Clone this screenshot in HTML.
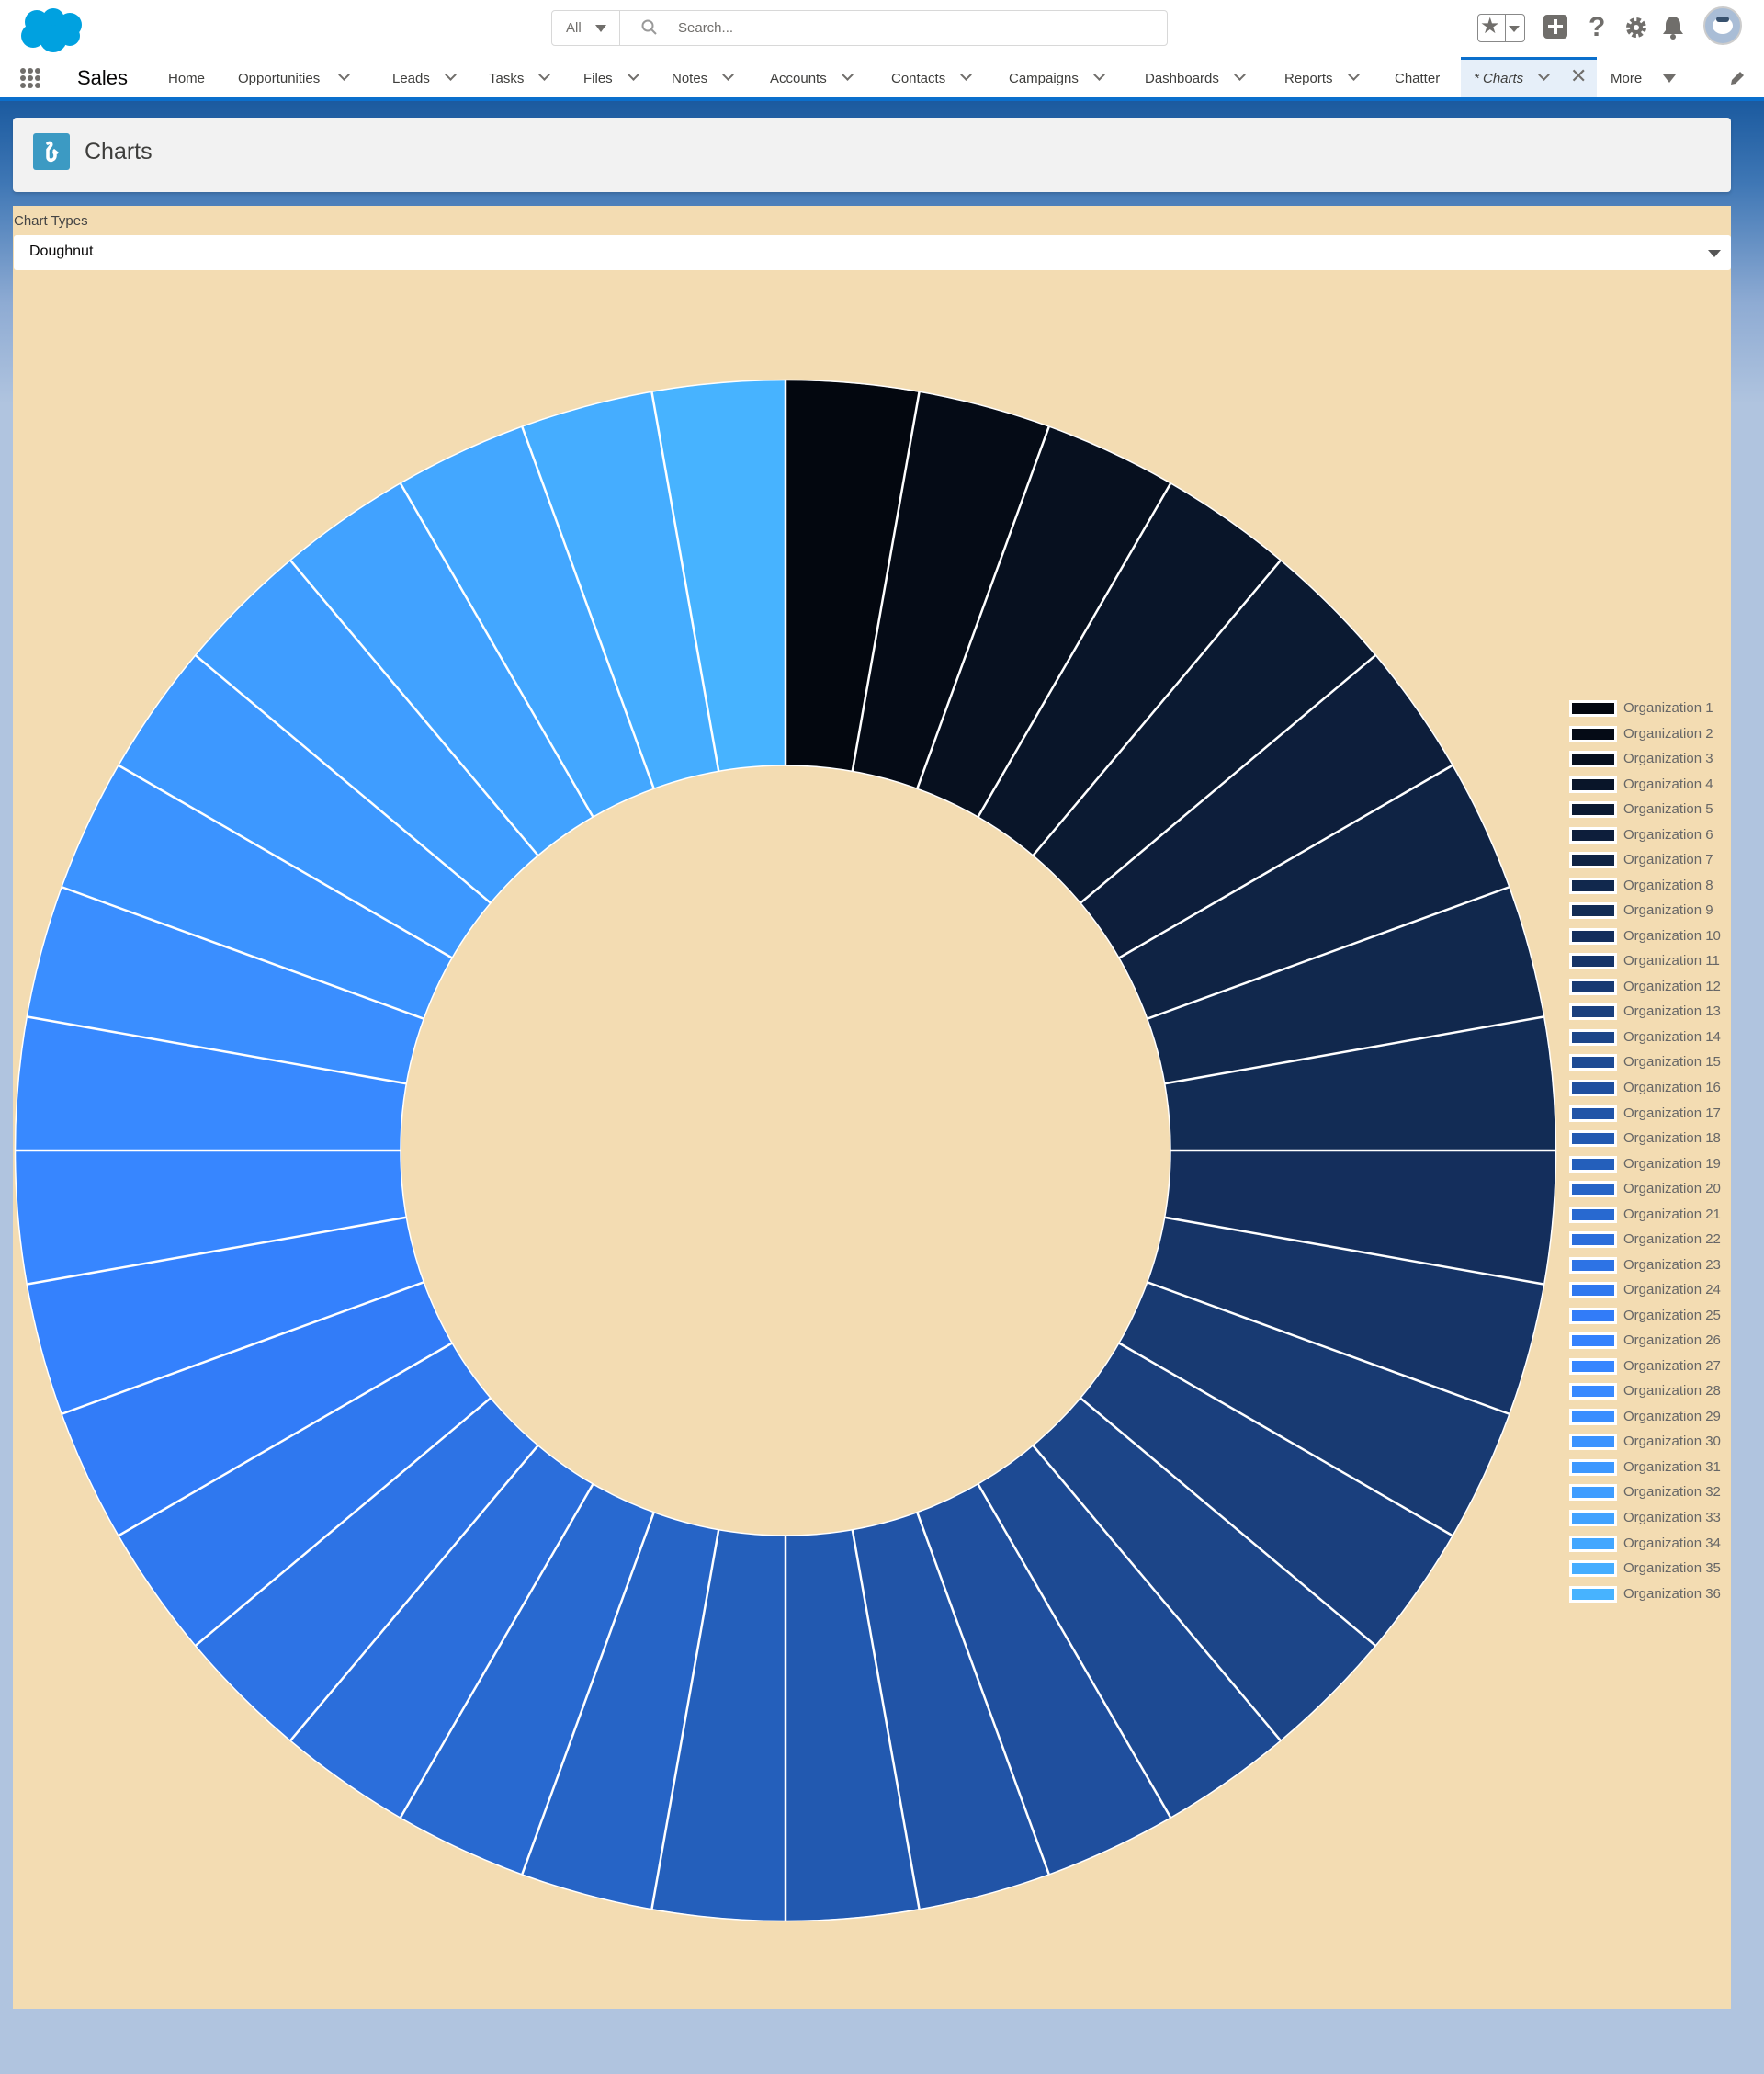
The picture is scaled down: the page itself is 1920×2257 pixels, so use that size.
<!DOCTYPE html>
<html><head><meta charset="utf-8">
<style>
*{margin:0;padding:0;box-sizing:border-box}
body{width:1920px;height:2257px;overflow:hidden;font-family:"Liberation Sans",sans-serif;background:#b0c4df;position:relative}
.bg{position:absolute;left:0;top:110px;width:1920px;height:330px;background:linear-gradient(#1b5a9f 0px,#3f77b5 90px,#8eabd3 220px,#b0c4df 330px)}
.top{position:absolute;left:0;top:0;width:1920px;height:110px;background:#fff;border-bottom:4px solid #0b6fcc}
.nav{position:absolute;top:77px;font-size:15px;color:#3e3e3c;white-space:nowrap}
.chev{display:inline-block;width:9px;height:9px;border-right:2px solid #706e6b;border-bottom:2px solid #706e6b;transform:rotate(45deg);margin-left:18px;position:relative;top:-4px}
.card{position:absolute;left:14px;top:128px;width:1870px;height:81px;background:#f2f2f2;border-radius:4px;box-shadow:0 2px 3px rgba(0,0,0,.15)}
.panel{position:absolute;left:14px;top:224px;width:1870px;height:1962px;background:#f3dcb2}
.lg{position:absolute;left:1708px;font-size:15px;color:#666;height:20px;line-height:20px}
.lg i{position:absolute;left:0;top:1px;width:52px;height:18px;border:3px solid #fff}
.lg span{position:absolute;left:59px;white-space:nowrap}
</style></head><body>
<div class="bg"></div>
<div class="top">
 <svg style="position:absolute;left:18px;top:6px" width="78" height="52" viewBox="0 0 78 52"><g fill="#00a1e0"><circle cx="22" cy="18" r="13"/><circle cx="40" cy="15" r="12"/><circle cx="58" cy="21" r="13"/><circle cx="18" cy="33" r="13"/><circle cx="40" cy="36" r="15"/><circle cx="58" cy="33" r="11"/></g></svg>
 <div style="position:absolute;left:600px;top:11px;width:671px;height:39px;border:1px solid #d8d8d8;border-radius:4px"></div>
 <div style="position:absolute;left:674px;top:11px;width:1px;height:39px;background:#d8d8d8"></div>
 <div style="position:absolute;left:616px;top:22px;font-size:15px;color:#706e6b">All</div>
 <div style="position:absolute;left:648px;top:27px;border-left:6px solid transparent;border-right:6px solid transparent;border-top:8px solid #706e6b"></div>
 <svg style="position:absolute;left:698px;top:21px" width="18" height="18" viewBox="0 0 18 18"><circle cx="7" cy="7" r="5.5" fill="none" stroke="#999" stroke-width="2"/><path d="M11 11l5 5" stroke="#999" stroke-width="2"/></svg>
 <div style="position:absolute;left:738px;top:22px;font-size:15px;color:#706e6b">Search...</div>
 <div style="position:absolute;left:1608px;top:15px;width:52px;height:31px;border:1px solid #888;border-radius:4px"></div>
 <div style="position:absolute;left:1638px;top:15px;width:1px;height:31px;background:#888"></div>
 <div style="position:absolute;left:1611px;top:14px;font-size:24px;color:#706e6b">★</div>
 <div style="position:absolute;left:1642px;top:28px;border-left:6px solid transparent;border-right:6px solid transparent;border-top:7px solid #706e6b"></div>
 <div style="position:absolute;left:1680px;top:16px;width:26px;height:26px;background:#706e6b;border-radius:4px"></div>
 <div style="position:absolute;left:1691px;top:21px;width:4px;height:16px;background:#fff"></div>
 <div style="position:absolute;left:1685px;top:27px;width:16px;height:4px;background:#fff"></div>
 <div style="position:absolute;left:1729px;top:13px;font-size:30px;font-weight:bold;color:#706e6b">?</div>
 <svg style="position:absolute;left:1768px;top:17px" width="26" height="26" viewBox="0 0 26 26"><circle cx="13" cy="13" r="8" fill="none" stroke="#706e6b" stroke-width="6" stroke-dasharray="4 2.3"/><circle cx="13" cy="13" r="7" fill="#706e6b"/><circle cx="13" cy="13" r="3" fill="#fff"/></svg>
 <svg style="position:absolute;left:1808px;top:16px" width="26" height="28" viewBox="0 0 26 28"><path d="M13 2c-5 0-8 4-8 9v6l-3 4h22l-3-4v-6c0-5-3-9-8-9z" fill="#706e6b"/><circle cx="13" cy="24" r="3" fill="#706e6b"/></svg>
 <div style="position:absolute;left:1854px;top:7px;width:42px;height:42px;border-radius:50%;background:#a9bdd6;border:2px solid #ccc"></div>
 <div style="position:absolute;left:1864px;top:19px;width:22px;height:18px;border-radius:50%;background:#fff"></div>
 <div style="position:absolute;left:1868px;top:18px;width:14px;height:6px;border-radius:4px;background:#37516e"></div>
 <svg style="position:absolute;left:22px;top:74px" width="22" height="22"><g fill="#706e6b"><circle cx="3" cy="3" r="3"/><circle cx="11" cy="3" r="3"/><circle cx="19" cy="3" r="3"/><circle cx="3" cy="11" r="3"/><circle cx="11" cy="11" r="3"/><circle cx="19" cy="11" r="3"/><circle cx="3" cy="19" r="3"/><circle cx="11" cy="19" r="3"/><circle cx="19" cy="19" r="3"/></g></svg>
 <div style="position:absolute;left:84px;top:72px;font-size:22px;color:#080707">Sales</div>
 <div class="nav" style="left:183px">Home</div>
 <div class="nav" style="left:259px">Opportunities<span class="chev" style="margin-left:22px"></span></div>
 <div class="nav" style="left:427px">Leads<span class="chev"></span></div>
 <div class="nav" style="left:532px">Tasks<span class="chev"></span></div>
 <div class="nav" style="left:635px">Files<span class="chev"></span></div>
 <div class="nav" style="left:731px">Notes<span class="chev"></span></div>
 <div class="nav" style="left:838px">Accounts<span class="chev"></span></div>
 <div class="nav" style="left:970px">Contacts<span class="chev"></span></div>
 <div class="nav" style="left:1098px">Campaigns<span class="chev"></span></div>
 <div class="nav" style="left:1246px">Dashboards<span class="chev"></span></div>
 <div class="nav" style="left:1398px">Reports<span class="chev"></span></div>
 <div class="nav" style="left:1518px">Chatter</div>
 <div style="position:absolute;left:1590px;top:62px;width:148px;height:44px;background:#e6eff9;border-top:3px solid #0b6fcc"></div>
 <div class="nav" style="left:1604px;font-style:italic">* Charts<span class="chev"></span></div>
 <div class="nav" style="left:1709px;top:70px;font-size:22px;color:#706e6b">✕</div>
 <div class="nav" style="left:1753px">More</div>
 <div style="position:absolute;left:1810px;top:81px;border-left:7px solid transparent;border-right:7px solid transparent;border-top:9px solid #706e6b"></div>
 <svg style="position:absolute;left:1882px;top:76px" width="18" height="18" viewBox="0 0 18 18"><path d="M2 16l1-5 9-9 4 4-9 9z" fill="#706e6b"/></svg>
</div>
<div class="card">
 <div style="position:absolute;left:22px;top:17px;width:40px;height:40px;background:#3c9ac3;border-radius:3px"></div>
 <svg style="position:absolute;left:22px;top:17px" width="40" height="40" viewBox="0 0 40 40"><path d="M16 11c3-2 5 1 3 3l-3 4v8c0 3 3 4 5 3 3-1 4-5 2-8" fill="none" stroke="#fff" stroke-width="3.5" stroke-linecap="round"/><path d="M22 18l5 4" stroke="#fff" stroke-width="3"/></svg>
 <div style="position:absolute;left:78px;top:23px;font-size:25px;color:#3e3e3c">Charts</div>
</div>
<div class="panel">
 <div style="position:absolute;left:1px;top:8px;font-size:15px;color:#444">Chart Types</div>
 <div style="position:absolute;left:1px;top:32px;width:1869px;height:38px;background:#fff;border-radius:3px"></div>
 <div style="position:absolute;left:18px;top:41px;font-size:16px;color:#080707">Doughnut</div>
 <div style="position:absolute;left:1845px;top:48px;border-left:7px solid transparent;border-right:7px solid transparent;border-top:8px solid #555"></div>
</div>
<svg style="position:absolute;left:0;top:0" width="1920" height="2257">
<g fill="none" stroke-width="419">
<circle cx="855" cy="1252" r="628.5" stroke="#03070f" stroke-dasharray="109.69 4000" transform="rotate(-90 855 1252)"/>
<circle cx="855" cy="1252" r="628.5" stroke="#050b16" stroke-dasharray="109.69 4000" transform="rotate(-80 855 1252)"/>
<circle cx="855" cy="1252" r="628.5" stroke="#07101f" stroke-dasharray="109.69 4000" transform="rotate(-70 855 1252)"/>
<circle cx="855" cy="1252" r="628.5" stroke="#091529" stroke-dasharray="109.69 4000" transform="rotate(-60 855 1252)"/>
<circle cx="855" cy="1252" r="628.5" stroke="#0b1a32" stroke-dasharray="109.69 4000" transform="rotate(-50 855 1252)"/>
<circle cx="855" cy="1252" r="628.5" stroke="#0d1e3b" stroke-dasharray="109.69 4000" transform="rotate(-40 855 1252)"/>
<circle cx="855" cy="1252" r="628.5" stroke="#0f2344" stroke-dasharray="109.69 4000" transform="rotate(-30 855 1252)"/>
<circle cx="855" cy="1252" r="628.5" stroke="#11284d" stroke-dasharray="109.69 4000" transform="rotate(-20 855 1252)"/>
<circle cx="855" cy="1252" r="628.5" stroke="#122c55" stroke-dasharray="109.69 4000" transform="rotate(-10 855 1252)"/>
<circle cx="855" cy="1252" r="628.5" stroke="#142e5c" stroke-dasharray="109.69 4000" transform="rotate(0 855 1252)"/>
<circle cx="855" cy="1252" r="628.5" stroke="#163467" stroke-dasharray="109.69 4000" transform="rotate(10 855 1252)"/>
<circle cx="855" cy="1252" r="628.5" stroke="#183a72" stroke-dasharray="109.69 4000" transform="rotate(20 855 1252)"/>
<circle cx="855" cy="1252" r="628.5" stroke="#1a3f7d" stroke-dasharray="109.69 4000" transform="rotate(30 855 1252)"/>
<circle cx="855" cy="1252" r="628.5" stroke="#1c4588" stroke-dasharray="109.69 4000" transform="rotate(40 855 1252)"/>
<circle cx="855" cy="1252" r="628.5" stroke="#1d4a93" stroke-dasharray="109.69 4000" transform="rotate(50 855 1252)"/>
<circle cx="855" cy="1252" r="628.5" stroke="#1f4f9e" stroke-dasharray="109.69 4000" transform="rotate(60 855 1252)"/>
<circle cx="855" cy="1252" r="628.5" stroke="#2154a7" stroke-dasharray="109.69 4000" transform="rotate(70 855 1252)"/>
<circle cx="855" cy="1252" r="628.5" stroke="#2259b0" stroke-dasharray="109.69 4000" transform="rotate(80 855 1252)"/>
<circle cx="855" cy="1252" r="628.5" stroke="#245fbb" stroke-dasharray="109.69 4000" transform="rotate(90 855 1252)"/>
<circle cx="855" cy="1252" r="628.5" stroke="#2664c6" stroke-dasharray="109.69 4000" transform="rotate(100 855 1252)"/>
<circle cx="855" cy="1252" r="628.5" stroke="#2869d0" stroke-dasharray="109.69 4000" transform="rotate(110 855 1252)"/>
<circle cx="855" cy="1252" r="628.5" stroke="#2b6edb" stroke-dasharray="109.69 4000" transform="rotate(120 855 1252)"/>
<circle cx="855" cy="1252" r="628.5" stroke="#2d73e5" stroke-dasharray="109.69 4000" transform="rotate(130 855 1252)"/>
<circle cx="855" cy="1252" r="628.5" stroke="#2f78ef" stroke-dasharray="109.69 4000" transform="rotate(140 855 1252)"/>
<circle cx="855" cy="1252" r="628.5" stroke="#327cf8" stroke-dasharray="109.69 4000" transform="rotate(150 855 1252)"/>
<circle cx="855" cy="1252" r="628.5" stroke="#3481fd" stroke-dasharray="109.69 4000" transform="rotate(160 855 1252)"/>
<circle cx="855" cy="1252" r="628.5" stroke="#3786ff" stroke-dasharray="109.69 4000" transform="rotate(170 855 1252)"/>
<circle cx="855" cy="1252" r="628.5" stroke="#3889ff" stroke-dasharray="109.69 4000" transform="rotate(180 855 1252)"/>
<circle cx="855" cy="1252" r="628.5" stroke="#3a8eff" stroke-dasharray="109.69 4000" transform="rotate(190 855 1252)"/>
<circle cx="855" cy="1252" r="628.5" stroke="#3b93ff" stroke-dasharray="109.69 4000" transform="rotate(200 855 1252)"/>
<circle cx="855" cy="1252" r="628.5" stroke="#3d98ff" stroke-dasharray="109.69 4000" transform="rotate(210 855 1252)"/>
<circle cx="855" cy="1252" r="628.5" stroke="#3f9dff" stroke-dasharray="109.69 4000" transform="rotate(220 855 1252)"/>
<circle cx="855" cy="1252" r="628.5" stroke="#41a2ff" stroke-dasharray="109.69 4000" transform="rotate(230 855 1252)"/>
<circle cx="855" cy="1252" r="628.5" stroke="#43a7ff" stroke-dasharray="109.69 4000" transform="rotate(240 855 1252)"/>
<circle cx="855" cy="1252" r="628.5" stroke="#45adff" stroke-dasharray="109.69 4000" transform="rotate(250 855 1252)"/>
<circle cx="855" cy="1252" r="628.5" stroke="#47b3ff" stroke-dasharray="109.69 4000" transform="rotate(260 855 1252)"/>
</g>
<g stroke="#fff" stroke-width="2.5">
<line x1="855" y1="833" x2="855" y2="414" transform="rotate(0 855 1252)"/><line x1="855" y1="833" x2="855" y2="414" transform="rotate(10 855 1252)"/><line x1="855" y1="833" x2="855" y2="414" transform="rotate(20 855 1252)"/><line x1="855" y1="833" x2="855" y2="414" transform="rotate(30 855 1252)"/><line x1="855" y1="833" x2="855" y2="414" transform="rotate(40 855 1252)"/><line x1="855" y1="833" x2="855" y2="414" transform="rotate(50 855 1252)"/><line x1="855" y1="833" x2="855" y2="414" transform="rotate(60 855 1252)"/><line x1="855" y1="833" x2="855" y2="414" transform="rotate(70 855 1252)"/><line x1="855" y1="833" x2="855" y2="414" transform="rotate(80 855 1252)"/><line x1="855" y1="833" x2="855" y2="414" transform="rotate(90 855 1252)"/><line x1="855" y1="833" x2="855" y2="414" transform="rotate(100 855 1252)"/><line x1="855" y1="833" x2="855" y2="414" transform="rotate(110 855 1252)"/><line x1="855" y1="833" x2="855" y2="414" transform="rotate(120 855 1252)"/><line x1="855" y1="833" x2="855" y2="414" transform="rotate(130 855 1252)"/><line x1="855" y1="833" x2="855" y2="414" transform="rotate(140 855 1252)"/><line x1="855" y1="833" x2="855" y2="414" transform="rotate(150 855 1252)"/><line x1="855" y1="833" x2="855" y2="414" transform="rotate(160 855 1252)"/><line x1="855" y1="833" x2="855" y2="414" transform="rotate(170 855 1252)"/><line x1="855" y1="833" x2="855" y2="414" transform="rotate(180 855 1252)"/><line x1="855" y1="833" x2="855" y2="414" transform="rotate(190 855 1252)"/><line x1="855" y1="833" x2="855" y2="414" transform="rotate(200 855 1252)"/><line x1="855" y1="833" x2="855" y2="414" transform="rotate(210 855 1252)"/><line x1="855" y1="833" x2="855" y2="414" transform="rotate(220 855 1252)"/><line x1="855" y1="833" x2="855" y2="414" transform="rotate(230 855 1252)"/><line x1="855" y1="833" x2="855" y2="414" transform="rotate(240 855 1252)"/><line x1="855" y1="833" x2="855" y2="414" transform="rotate(250 855 1252)"/><line x1="855" y1="833" x2="855" y2="414" transform="rotate(260 855 1252)"/><line x1="855" y1="833" x2="855" y2="414" transform="rotate(270 855 1252)"/><line x1="855" y1="833" x2="855" y2="414" transform="rotate(280 855 1252)"/><line x1="855" y1="833" x2="855" y2="414" transform="rotate(290 855 1252)"/><line x1="855" y1="833" x2="855" y2="414" transform="rotate(300 855 1252)"/><line x1="855" y1="833" x2="855" y2="414" transform="rotate(310 855 1252)"/><line x1="855" y1="833" x2="855" y2="414" transform="rotate(320 855 1252)"/><line x1="855" y1="833" x2="855" y2="414" transform="rotate(330 855 1252)"/><line x1="855" y1="833" x2="855" y2="414" transform="rotate(340 855 1252)"/><line x1="855" y1="833" x2="855" y2="414" transform="rotate(350 855 1252)"/>
</g>
<circle cx="855" cy="1252" r="838.5" fill="none" stroke="#fff" stroke-width="1.5"/>
<circle cx="855" cy="1252" r="419" fill="none" stroke="#fff" stroke-width="1.5"/>
</svg>
<div class="lg" style="top:761px"><i style="background:#03070f"></i><span>Organization 1</span></div>
<div class="lg" style="top:788.5px"><i style="background:#050b16"></i><span>Organization 2</span></div>
<div class="lg" style="top:816px"><i style="background:#07101f"></i><span>Organization 3</span></div>
<div class="lg" style="top:843.6px"><i style="background:#091529"></i><span>Organization 4</span></div>
<div class="lg" style="top:871.1px"><i style="background:#0b1a32"></i><span>Organization 5</span></div>
<div class="lg" style="top:898.7px"><i style="background:#0d1e3b"></i><span>Organization 6</span></div>
<div class="lg" style="top:926.2px"><i style="background:#0f2344"></i><span>Organization 7</span></div>
<div class="lg" style="top:953.7px"><i style="background:#11284d"></i><span>Organization 8</span></div>
<div class="lg" style="top:981.2px"><i style="background:#122c55"></i><span>Organization 9</span></div>
<div class="lg" style="top:1008.8px"><i style="background:#142e5c"></i><span>Organization 10</span></div>
<div class="lg" style="top:1036.3px"><i style="background:#163467"></i><span>Organization 11</span></div>
<div class="lg" style="top:1063.8px"><i style="background:#183a72"></i><span>Organization 12</span></div>
<div class="lg" style="top:1091.4px"><i style="background:#1a3f7d"></i><span>Organization 13</span></div>
<div class="lg" style="top:1118.9px"><i style="background:#1c4588"></i><span>Organization 14</span></div>
<div class="lg" style="top:1146.4px"><i style="background:#1d4a93"></i><span>Organization 15</span></div>
<div class="lg" style="top:1174px"><i style="background:#1f4f9e"></i><span>Organization 16</span></div>
<div class="lg" style="top:1201.5px"><i style="background:#2154a7"></i><span>Organization 17</span></div>
<div class="lg" style="top:1229px"><i style="background:#2259b0"></i><span>Organization 18</span></div>
<div class="lg" style="top:1256.5px"><i style="background:#245fbb"></i><span>Organization 19</span></div>
<div class="lg" style="top:1284.1px"><i style="background:#2664c6"></i><span>Organization 20</span></div>
<div class="lg" style="top:1311.6px"><i style="background:#2869d0"></i><span>Organization 21</span></div>
<div class="lg" style="top:1339.1px"><i style="background:#2b6edb"></i><span>Organization 22</span></div>
<div class="lg" style="top:1366.7px"><i style="background:#2d73e5"></i><span>Organization 23</span></div>
<div class="lg" style="top:1394.2px"><i style="background:#2f78ef"></i><span>Organization 24</span></div>
<div class="lg" style="top:1421.7px"><i style="background:#327cf8"></i><span>Organization 25</span></div>
<div class="lg" style="top:1449.3px"><i style="background:#3481fd"></i><span>Organization 26</span></div>
<div class="lg" style="top:1476.8px"><i style="background:#3786ff"></i><span>Organization 27</span></div>
<div class="lg" style="top:1504.3px"><i style="background:#3889ff"></i><span>Organization 28</span></div>
<div class="lg" style="top:1531.8px"><i style="background:#3a8eff"></i><span>Organization 29</span></div>
<div class="lg" style="top:1559.4px"><i style="background:#3b93ff"></i><span>Organization 30</span></div>
<div class="lg" style="top:1586.9px"><i style="background:#3d98ff"></i><span>Organization 31</span></div>
<div class="lg" style="top:1614.4px"><i style="background:#3f9dff"></i><span>Organization 32</span></div>
<div class="lg" style="top:1642px"><i style="background:#41a2ff"></i><span>Organization 33</span></div>
<div class="lg" style="top:1669.5px"><i style="background:#43a7ff"></i><span>Organization 34</span></div>
<div class="lg" style="top:1697px"><i style="background:#45adff"></i><span>Organization 35</span></div>
<div class="lg" style="top:1724.5px"><i style="background:#47b3ff"></i><span>Organization 36</span></div>
</body></html>
